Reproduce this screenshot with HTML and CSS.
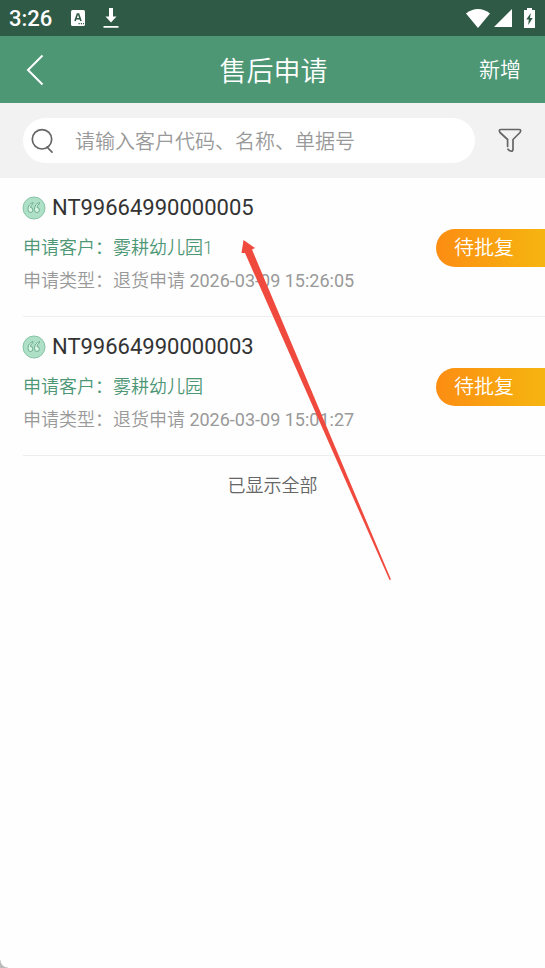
FILE: index.html
```html
<!DOCTYPE html>
<html lang="zh-CN">
<head>
<meta charset="utf-8">
<meta name="viewport" content="width=device-width, initial-scale=1">
<title>售后申请</title>
<link rel="stylesheet" href="styles.css">
</head>
<body>
<div class="status-bar">
  <span class="clock">3:26</span>
  <svg class="status-keyboard" width="14" height="16" viewBox="0 0 14 16" aria-hidden="true"><rect width="14" height="16" rx="1.5" fill="#fff"/><path d="M4 11 6.400 4h1.200L10 11M5 8.800h4" fill="none" stroke="#2f5a45" stroke-width="1.6"/><path d="M7.500 13.700h1.300m1 0h1.200m1 0h1" stroke="#2f5a45" stroke-width="1.3"/></svg>
  <svg class="status-download" width="16" height="20" viewBox="0 0 16 20" aria-hidden="true"><path d="M6 0h4v8.500h3.500L8 14.500 2.500 8.500H6zM.5 18h15v1.800H.5z" fill="#fff"/></svg>
  <svg class="status-wifi" width="24" height="19" viewBox="0 0 24 19" aria-hidden="true"><path d="M0 4.500Q5.500 0 12 0t12 4.500L12 19z" fill="#fff"/></svg>
  <svg class="status-signal" width="18" height="18" viewBox="0 0 18 18" aria-hidden="true"><path d="M18 0v18H0z" fill="#fff"/></svg>
  <svg class="status-battery" width="11" height="20" viewBox="0 0 11 20" aria-hidden="true"><path d="M3 0h5v2h3v18H0V2h3z" fill="#fff"/><path d="M6.800 5 2.300 11.600h2.500L4.200 17l4.500-7H6z" fill="#2f5a45"/></svg>
</div>
<header class="nav">
  <button class="back" type="button" aria-label="返回"><svg width="18" height="32" viewBox="0 0 18 32"><path d="M16.500 1.500 2 16l14.500 14.500" fill="none" stroke="#fff" stroke-width="2"/></svg></button>
  <h1 class="nav-title">售后申请</h1>
  <button class="add" type="button">新增</button>
</header>
<main>
  <form class="search">
    <label class="search-box">
      <svg width="24" height="26" viewBox="0 0 24 26" aria-hidden="true"><g fill="none" stroke="#666" stroke-width="1.700" stroke-linecap="round"><circle cx="11" cy="11.300" r="9.700"/><path d="m16 19 5 5.200"/></g></svg>
      <input class="search-input" type="search" placeholder="请输入客户代码、名称、单据号" aria-label="搜索">
    </label>
    <button class="filter" type="button" aria-label="筛选"><svg width="24" height="25" viewBox="0 0 24 25"><path d="M9.600 18.500v-7L2 4.500Q.3 1.500 3 1.500h18q2.700 0 1 3l-7 7v9.500q0 2.700-2.200 2-1.700-.2-2.800-1.800" fill="none" stroke="#666" stroke-width="1.700" stroke-linejoin="round" stroke-linecap="round"/></svg></button>
  </form>
  <ul class="list">
    <li class="item">
      <div class="info">
        <h2 class="number"><svg width="24" height="24" viewBox="0 0 24 24" aria-hidden="true"><circle cx="12" cy="12" r="11" fill="#aee0c8" stroke="#87c4a5"/><g fill="#d8f5e6" stroke="#65a586" stroke-width=".9"><path d="M11 6.500Q6 8 6 13.500q0 3 2.400 3 2.500 0 2.500-2.500T8.500 11.500q0-2.500 2.500-3.700z"/><path d="M17.500 6.500q-5 1.500-5 7 0 3 2.400 3 2.500 0 2.500-2.500T15 11.500q0-2.500 2.500-3.700z"/></g></svg>NT99664990000005</h2>
        <p class="customer">申请客户：雾耕幼儿园1</p>
        <p class="detail">申请类型：退货申请 <time>2026-03-09 15:26:05</time></p>
      </div>
      <span class="badge">待批复</span>
    </li>
    <li class="item">
      <div class="info">
        <h2 class="number"><svg width="24" height="24" viewBox="0 0 24 24" aria-hidden="true"><circle cx="12" cy="12" r="11" fill="#aee0c8" stroke="#87c4a5"/><g fill="#d8f5e6" stroke="#65a586" stroke-width=".9"><path d="M11 6.500Q6 8 6 13.500q0 3 2.400 3 2.500 0 2.500-2.500T8.500 11.500q0-2.500 2.500-3.700z"/><path d="M17.500 6.500q-5 1.500-5 7 0 3 2.400 3 2.500 0 2.500-2.500T15 11.500q0-2.500 2.500-3.700z"/></g></svg>NT99664990000003</h2>
        <p class="customer">申请客户：雾耕幼儿园</p>
        <p class="detail">申请类型：退货申请 <time>2026-03-09 15:01:27</time></p>
      </div>
      <span class="badge">待批复</span>
    </li>
  </ul>
  <p class="end">已显示全部</p>
  <svg class="arrow" width="152" height="342" viewBox="0 0 152 342" aria-hidden="true"><path d="M2.500 1 14 9l-3 1.500L150 340.500l-1.500.5L4 14 .5 14z" fill="#f04a3e"/></svg>
</main>
<div class="corner"></div>
</body>
</html>
```
FILE: styles.css
```css
* {
  box-sizing: border-box;
}

body {
  display: flex;
  flex-direction: column;
  min-height: 100vh;
  margin: 0;
  background: #fefefe;
  color: #333;
  font-family: Roboto, "Noto Sans CJK SC", sans-serif;
  font-size: 18px;
  font-weight: 350;
}

h1, h2, p, ul {
  margin: 0;
  padding: 0;
  font-weight: inherit;
}

button {
  padding: 0;
  border: 0;
  background: none;
  color: inherit;
  font: inherit;
}

svg {
  display: block;
  flex: none;
}

.status-bar {
  display: flex;
  align-items: center;
  height: 36px;
  padding: 0 10px 0 9px;
  background: #2f5a45;
  color: #fff;
}

.clock {
  font-size: 22px;
  font-weight: 500;
}

.status-keyboard {
  margin-left: 19px;
}

.status-download {
  margin-left: 18px;
}

.status-wifi {
  margin-left: auto;
}

.status-signal {
  margin-left: 4px;
}

.status-battery {
  margin-left: 12px;
}

.nav {
  display: grid;
  grid-template-columns: 1fr auto 1fr;
  align-items: center;
  height: 67px;
  padding: 0 24px 0 26px;
  background: #4d9775;
  color: #fff;
}

.back {
  justify-self: start;
}

.nav-title {
  padding-top: 4px;
  font-size: 27px;
  line-height: 40px;
}

.add {
  justify-self: end;
  font-size: 21px;
  line-height: 32px;
}

.search {
  display: flex;
  align-items: center;
  gap: 23px;
  height: 75px;
  padding: 0 23px;
  background: #f2f2f2;
}

.search-box {
  display: flex;
  flex: 1;
  align-items: center;
  gap: 20px;
  height: 45px;
  padding: 0 16px 0 8px;
  border-radius: 23px;
  background: #fff;
}

.search-input {
  flex: 1;
  min-width: 0;
  padding: 2px 0 0;
  border: 0;
  outline: 0;
  background: none;
  color: #333;
  font: inherit;
  font-size: 20px;
  appearance: none;
}

.search-input::placeholder {
  color: #999;
}

.list {
  padding-left: 23px;
  list-style: none;
}

.item {
  display: flex;
  align-items: center;
  justify-content: space-between;
  padding: 13px 0 19px;
  border-bottom: 1px solid #eee;
}

.number {
  display: flex;
  align-items: center;
  gap: 6px;
  margin-bottom: 6px;
  margin-left: -1px;
  font-size: 22px;
  font-weight: 400;
  line-height: 34px;
}

.customer,
.detail {
  line-height: 33px;
}

.customer {
  color: #4d9775;
}

.detail {
  color: #999;
}

.detail time {
  font-weight: 400;
}

.badge {
  width: 109px;
  margin-top: 8px;
  padding-left: 18px;
  border-radius: 19px 0 0 19px;
  background: linear-gradient(to right, #fc8d12, #f6b510);
  color: #fff;
  font-size: 20px;
  line-height: 38px;
}

.end {
  color: #666;
  line-height: 60px;
  text-align: center;
}

.arrow {
  position: absolute;
  top: 239px;
  left: 241px;
  pointer-events: none;
}

.corner {
  width: 8px;
  height: 8px;
  margin-top: auto;
  background: radial-gradient(circle at 100% 0, transparent 7px, #bbb 8px);
}
```
